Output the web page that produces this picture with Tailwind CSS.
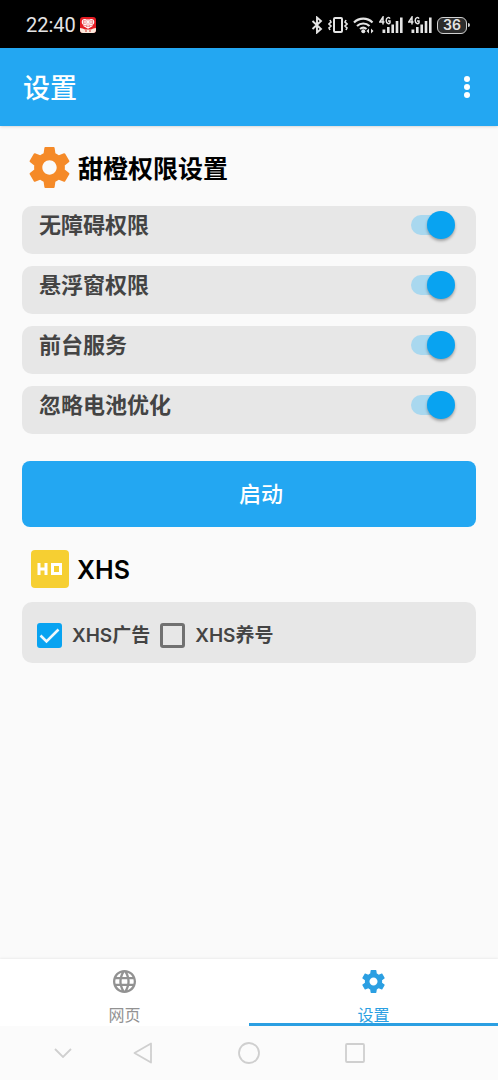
<!DOCTYPE html>
<html lang="zh-CN">
<head>
<meta charset="utf-8">
<meta name="viewport" content="width=device-width, initial-scale=1">
<title>设置</title>
<script src="https://cdn.jsdelivr.net/npm/@tailwindcss/browser@4"></script>
</head>
<body class="flex min-h-screen flex-col bg-[#fafafa] font-['Inter','Noto_Sans_CJK_SC',sans-serif] text-[#444]">
<svg class="hidden" aria-hidden="true">
  <symbol id="gear" viewBox="2 2 20 20"><path d="M19.43 12.98c.04-.32.07-.64.07-.98s-.03-.66-.07-.98l2.11-1.65c.19-.15.24-.42.12-.64l-2-3.46c-.12-.22-.39-.3-.61-.22l-2.49 1c-.52-.4-1.08-.73-1.69-.98l-.38-2.65C14.46 2.18 14.25 2 14 2h-4c-.25 0-.46.18-.49.42l-.38 2.65c-.61.25-1.17.59-1.69.98l-2.49-1c-.23-.09-.49 0-.61.22l-2 3.46c-.13.22-.07.49.12.64l2.11 1.65c-.04.32-.07.65-.07.98s.03.66.07.98l-2.11 1.65c-.19.15-.24.42-.12.64l2 3.46c.12.22.39.3.61.22l2.49-1c.52.4 1.08.73 1.69.98l.38 2.65c.03.24.24.42.49.42h4c.25 0 .46-.18.49-.42l.38-2.65c.61-.25 1.17-.59 1.69-.98l2.49 1c.23.09.49 0 .61-.22l2-3.46c.12-.22.07-.49-.12-.64l-2.11-1.65zM12 15.5c-1.93 0-3.5-1.57-3.5-3.5s1.57-3.5 3.5-3.5 3.5 1.57 3.5 3.5-1.57 3.5-3.5 3.5z"/></symbol>
  <symbol id="signal" viewBox="0 0 24 18">
    <g fill="none" stroke="currentColor" stroke-width="1.500"><path d="M4 8.500V1L.8 6H5.500"/><path d="M11 2.600C10.300 1 7.200 1 7.200 4.600S10.600 8.200 11 6.800V5H9"/></g>
    <path fill="currentColor" d="M3.500 13.500h2.800V17H3.500zM8 11h2.600v6H8zM12.400 8.500H15V17h-2.600zM16.700 5h2.600v12h-2.600zM21 1.500h2.600V17H21z"/>
  </symbol>
</svg>

<div class="flex h-12 items-center justify-between bg-black pt-0.5 pl-[26px] pr-7 text-[#e4e4e4]">
  <div class="flex items-center gap-1">
    <span class="font-['Roboto'] text-xl">22:40</span>
    <svg class="size-4" viewBox="0 0 16 16" aria-hidden="true">
      <rect width="16" height="16" rx="3" fill="#e51c23"/>
      <path d="M0 11q3 0 5 1.500h6Q13 11 16 11v2a3 3 0 0 1-3 3H3a3 3 0 0 1-3-3z" fill="#fbe9dc"/>
      <g fill="none" stroke="#fff" stroke-width="1.100"><circle cx="4.800" cy="5" r="2.500"/><circle cx="11.200" cy="5" r="2.500"/><path d="M3 5h10M5 3v4M11 3v4M8 2v9M3.500 8.500L8 11l4.500-2.500M5 8h6"/></g>
      <path d="M5 14h2M9 14h2" stroke="#d23a35"/>
    </svg>
  </div>
  <div class="flex items-center gap-[5px]">
    <svg class="h-[18px] w-3" viewBox="0 0 12 18" fill="none" stroke="currentColor" stroke-width="1.900" role="img" aria-label="蓝牙"><path d="M1.500 5l8.500 8-4 3.500v-15L10 5l-8.500 8"/></svg>
    <svg class="h-[18px] w-5" viewBox="0 0 20 18" fill="none" stroke="currentColor" stroke-width="2" role="img" aria-label="振动"><rect x="6" y="2" width="8" height="14" rx="1"/><path d="M2 4l1 2-2 2 2 2-2 2 1 2M18 4l-1 2 2 2-2 2 2 2-1 2" stroke-width="1.600"/></svg>
    <svg class="h-[18px] w-[21px]" viewBox="0 0 21 18" fill="none" stroke="currentColor" stroke-width="2.200" role="img" aria-label="无线网络"><path d="M1 6.500a13 13 0 0 1 18.500 0M4 10a9 9 0 0 1 12.500 0M7 13a5 5 0 0 1 6.500 0"/><circle cx="10.300" cy="15.300" r="2" fill="currentColor" stroke="none"/><path d="M13.500 15l2.500-2.500v5zM20.500 15L18 12.500v5z" fill="currentColor" stroke="none"/></svg>
    <svg class="h-[18px] w-6" role="img" aria-label="4G 信号"><use href="#signal"/></svg>
    <svg class="h-[18px] w-6" role="img" aria-label="4G 信号"><use href="#signal"/></svg>
    <div class="flex items-center gap-px">
      <div class="flex h-[17px] w-[30px] items-center justify-center rounded-md border border-[#d0d0d0] bg-[#2c2c2c] text-sm font-semibold">36</div>
      <div class="h-1 w-0.5 rounded-r bg-[#d0d0d0]"></div>
    </div>
  </div>
</div>

<header class="flex h-[78px] items-center justify-between bg-[#23a7f2] pl-[23px] pr-[21px] text-white shadow-sm">
  <h1 class="pt-1 text-[27px] leading-8 font-medium">设置</h1>
  <button type="button" aria-label="更多选项" class="flex w-5 flex-col items-center gap-[2px]">
    <span class="size-[6px] rounded-full bg-white"></span><span class="size-[6px] rounded-full bg-white"></span><span class="size-[6px] rounded-full bg-white"></span>
  </button>
</header>

<main class="flex grow flex-col px-[22px] pt-[21px]">
  <h2 class="flex items-center gap-2 pl-[7px] text-[25px] leading-9 font-semibold text-black">
    <svg class="size-[41px] fill-[#f58a28]" aria-hidden="true"><use href="#gear"/></svg><span class="pt-0.5">甜橙权限设置</span>
  </h2>

  <div class="mt-[18px] flex flex-col gap-3 text-[22px] leading-[38px] font-semibold">
    <label class="flex h-12 items-start justify-between rounded-[10px] bg-[#e7e7e7] pl-[17px] pr-[21px]">无障碍权限
      <span class="relative mt-[5px] flex h-7 w-11 items-center">
        <input type="checkbox" role="switch" checked class="peer h-5 w-10 appearance-none rounded-full bg-[#a9d8ef]">
        <span class="absolute left-0 size-7 rounded-full bg-white shadow-[0_2px_3px_rgba(0,0,0,0.3)] peer-checked:left-4 peer-checked:bg-[#08a3f1]"></span>
      </span>
    </label>
    <label class="flex h-12 items-start justify-between rounded-[10px] bg-[#e7e7e7] pl-[17px] pr-[21px]">悬浮窗权限
      <span class="relative mt-[5px] flex h-7 w-11 items-center">
        <input type="checkbox" role="switch" checked class="peer h-5 w-10 appearance-none rounded-full bg-[#a9d8ef]">
        <span class="absolute left-0 size-7 rounded-full bg-white shadow-[0_2px_3px_rgba(0,0,0,0.3)] peer-checked:left-4 peer-checked:bg-[#08a3f1]"></span>
      </span>
    </label>
    <label class="flex h-12 items-start justify-between rounded-[10px] bg-[#e7e7e7] pl-[17px] pr-[21px]">前台服务
      <span class="relative mt-[5px] flex h-7 w-11 items-center">
        <input type="checkbox" role="switch" checked class="peer h-5 w-10 appearance-none rounded-full bg-[#a9d8ef]">
        <span class="absolute left-0 size-7 rounded-full bg-white shadow-[0_2px_3px_rgba(0,0,0,0.3)] peer-checked:left-4 peer-checked:bg-[#08a3f1]"></span>
      </span>
    </label>
    <label class="flex h-12 items-start justify-between rounded-[10px] bg-[#e7e7e7] pl-[17px] pr-[21px]">忽略电池优化
      <span class="relative mt-[5px] flex h-7 w-11 items-center">
        <input type="checkbox" role="switch" checked class="peer h-5 w-10 appearance-none rounded-full bg-[#a9d8ef]">
        <span class="absolute left-0 size-7 rounded-full bg-white shadow-[0_2px_3px_rgba(0,0,0,0.3)] peer-checked:left-4 peer-checked:bg-[#08a3f1]"></span>
      </span>
    </label>
  </div>

  <button type="button" class="mt-[27px] h-[66px] rounded-lg bg-[#23a7f2] pl-6 text-[22px] font-medium text-white">启动</button>

  <h2 class="mt-[23px] flex items-center gap-2 pl-[9px] text-[25px] leading-9 font-semibold text-black">
    <svg class="size-[38px]" viewBox="0 0 38 38" aria-hidden="true"><rect width="38" height="38" rx="4" fill="#f6cf32"/><path d="M8 13v12M15 13v12M8 19h7M21.500 14.500h8v9h-8z" fill="none" stroke="#fff" stroke-width="3"/></svg><span class="pt-0.5">XHS</span>
  </h2>

  <div class="mt-[14px] flex h-[61px] items-center gap-[10px] rounded-[10px] bg-[#e7e7e7] px-[15px] pt-[6px] text-[19px] leading-7 font-semibold">
    <label class="flex items-center gap-[10px]">
      <span class="relative flex size-[25px]">
        <input type="checkbox" checked class="peer size-[25px] appearance-none rounded-[3px] border-[3px] border-[#717171] checked:border-[#08a3f1] checked:bg-[#08a3f1]">
        <svg class="pointer-events-none absolute inset-0 hidden size-[25px] peer-checked:block" viewBox="0 0 25 25" fill="none" stroke="#eef7fc" stroke-width="2.600" aria-hidden="true"><path d="M3.500 12.500l6 6L21.500 6.500"/></svg>
      </span>XHS广告
    </label>
    <label class="flex items-center gap-[10px]">
      <span class="relative flex size-[25px]">
        <input type="checkbox" class="peer size-[25px] appearance-none rounded-[3px] border-[3px] border-[#717171] checked:border-[#08a3f1] checked:bg-[#08a3f1]">
        <svg class="pointer-events-none absolute inset-0 hidden size-[25px] peer-checked:block" viewBox="0 0 25 25" fill="none" stroke="#eef7fc" stroke-width="2.600" aria-hidden="true"><path d="M3.500 12.500l6 6L21.500 6.500"/></svg>
      </span>XHS养号
    </label>
  </div>
</main>

<nav class="grid grid-cols-2 bg-white text-base leading-4 shadow-[0_-1px_2px_rgba(0,0,0,0.06)]">
  <a href="#web" class="flex flex-col items-center gap-[14px] border-b-[3px] border-transparent pt-[11px] text-[#929292]">
    <svg class="size-[23px]" viewBox="2 2 20 20" fill="currentColor" aria-hidden="true"><path d="M11.990 2C6.470 2 2 6.480 2 12s4.470 10 9.990 10C17.520 22 22 17.520 22 12S17.520 2 11.990 2zm6.930 6h-2.950c-.32-1.250-.78-2.450-1.380-3.560 1.840.63 3.370 1.910 4.330 3.560zM12 4.040c.83 1.200 1.480 2.530 1.910 3.960h-3.820c.43-1.430 1.080-2.760 1.910-3.960zM4.260 14C4.100 13.360 4 12.690 4 12s.1-1.360.26-2h3.380c-.08.66-.14 1.320-.14 2s.06 1.340.14 2H4.260zm.82 2h2.950c.32 1.250.78 2.450 1.380 3.560-1.840-.63-3.370-1.900-4.330-3.560zm2.950-8H5.080c.96-1.660 2.490-2.930 4.330-3.560C8.810 5.550 8.350 6.750 8.030 8zM12 19.960c-.83-1.200-1.480-2.530-1.910-3.960h3.820c-.43 1.430-1.080 2.760-1.910 3.960zM14.340 14H9.660c-.09-.66-.16-1.320-.16-2s.07-1.350.16-2h4.680c.09.65.16 1.320.16 2s-.07 1.340-.16 2zm.25 5.560c.6-1.110 1.060-2.310 1.380-3.560h2.950c-.96 1.650-2.490 2.930-4.330 3.560zM16.360 14c.08-.66.14-1.320.14-2s-.06-1.340-.14-2h3.380c.16.64.26 1.310.26 2s-.1 1.360-.26 2h-3.380z"/></svg>
    网页
  </a>
  <a href="#settings" aria-current="page" class="flex flex-col items-center gap-[14px] border-b-[3px] border-[#2b9fe2] pt-[11px] text-[#2b9fe2]">
    <svg class="size-[23px] fill-current" aria-hidden="true"><use href="#gear"/></svg>
    设置
  </a>
</nav>

<div class="grid h-[54px] grid-cols-[125px_repeat(3,1fr)_88px] bg-[#fbfbfb] text-[#cfcfcf]">
  <button type="button" aria-label="收起" class="flex items-center justify-center"><svg class="h-[10px] w-[18px]" viewBox="0 0 18 10" fill="none" stroke="currentColor" stroke-width="1.800"><path d="M1 1l8 8 8-8"/></svg></button>
  <button type="button" aria-label="返回" class="flex items-center pl-2"><svg class="h-[22px] w-5" viewBox="0 0 20 22" fill="none" stroke="currentColor" stroke-width="1.800" stroke-linejoin="round"><path d="M18 1.500v19L1.500 11z"/></svg></button>
  <button type="button" aria-label="主屏幕" class="flex items-center pl-[18px]"><svg class="size-[22px]" viewBox="0 0 22 22" fill="none" stroke="currentColor" stroke-width="1.800"><circle cx="11" cy="11" r="10"/></svg></button>
  <button type="button" aria-label="最近任务" class="flex items-center pl-[30px]"><svg class="size-5" viewBox="0 0 20 20" fill="none" stroke="currentColor" stroke-width="1.800"><rect x="1" y="1" width="18" height="18" rx="1"/></svg></button>
</div>
</body>
</html>
